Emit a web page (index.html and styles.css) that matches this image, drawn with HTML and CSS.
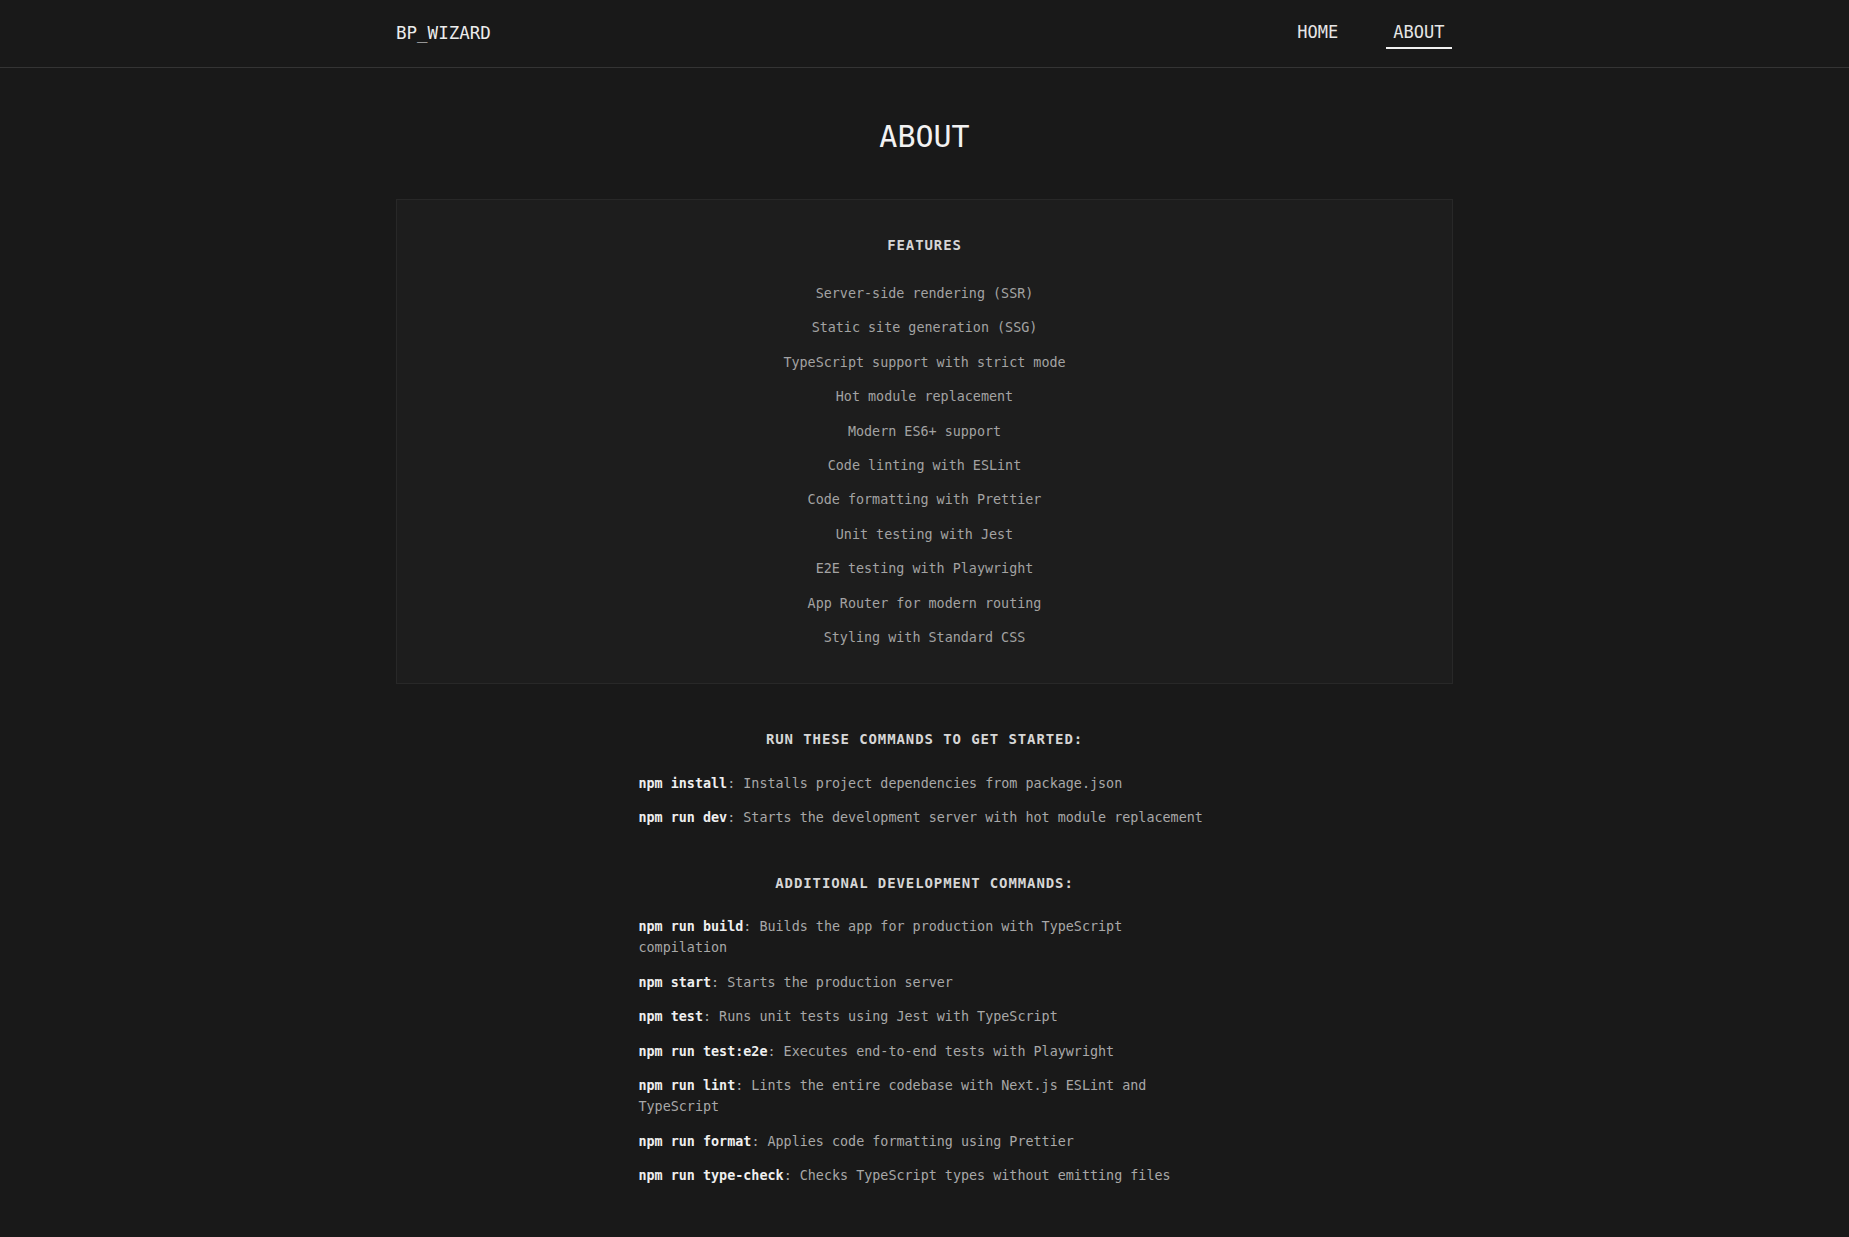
FILE: index.html
```html
<!DOCTYPE html>
<html lang="en">
<head>
<meta charset="utf-8">
<title>About - BP_WIZARD</title>
<link rel="stylesheet" href="styles.css">
</head>
<body>
<header class="site-header">
  <div class="container header-inner">
    <a class="logo" href="#">BP_WIZARD</a>
    <nav class="nav">
      <a class="nav-link" href="#">HOME</a>
      <a class="nav-link active" href="#">ABOUT</a>
    </nav>
  </div>
</header>
<main class="container main">
  <h1 class="page-title">ABOUT</h1>
  <section class="features">
    <h2 class="section-heading">FEATURES</h2>
    <ul class="feature-list">
      <li>Server-side rendering (SSR)</li>
      <li>Static site generation (SSG)</li>
      <li>TypeScript support with strict mode</li>
      <li>Hot module replacement</li>
      <li>Modern ES6+ support</li>
      <li>Code linting with ESLint</li>
      <li>Code formatting with Prettier</li>
      <li>Unit testing with Jest</li>
      <li>E2E testing with Playwright</li>
      <li>App Router for modern routing</li>
      <li>Styling with Standard CSS</li>
    </ul>
  </section>
  <section class="commands">
    <h2 class="section-heading">RUN THESE COMMANDS TO GET STARTED:</h2>
    <ul class="command-list">
      <li><span class="cmd">npm install</span>: Installs project dependencies from package.json</li>
      <li><span class="cmd">npm run dev</span>: Starts the development server with hot module replacement</li>
    </ul>
  </section>
  <section class="commands commands-extra">
    <h2 class="section-heading">ADDITIONAL DEVELOPMENT COMMANDS:</h2>
    <ul class="command-list">
      <li><span class="cmd">npm run build</span>: Builds the app for production with TypeScript compilation</li>
      <li><span class="cmd">npm start</span>: Starts the production server</li>
      <li><span class="cmd">npm test</span>: Runs unit tests using Jest with TypeScript</li>
      <li><span class="cmd">npm run test:e2e</span>: Executes end-to-end tests with Playwright</li>
      <li><span class="cmd">npm run lint</span>: Lints the entire codebase with Next.js ESLint and TypeScript</li>
      <li><span class="cmd">npm run format</span>: Applies code formatting using Prettier</li>
      <li><span class="cmd">npm run type-check</span>: Checks TypeScript types without emitting files</li>
    </ul>
  </section>
</main>
</body>
</html>
```

FILE: styles.css
```css
* {
  box-sizing: border-box;
}

html, body {
  margin: 0;
  padding: 0;
}

body {
  background: #191919;
  color: #a6a6a6;
  font-family: "DejaVu Sans Mono", "Liberation Mono", monospace;
  font-size: 13.4px;
  line-height: 21px;
}

a {
  text-decoration: none;
  color: inherit;
}

.container {
  width: 1057px;
  margin: 0 auto;
}

.site-header {
  border-bottom: 1px solid #343434;
}

.header-inner {
  height: 67px;
  display: flex;
  align-items: center;
  justify-content: space-between;
}

.logo {
  color: #ececec;
  font-size: 17.5px;
  line-height: 21px;
  margin-top: -1px;
}

.nav {
  display: flex;
  gap: 40px;
  align-items: center;
  margin-top: 4px;
}

.nav-link {
  color: #e6e6e6;
  font-size: 17px;
  line-height: 21px;
  padding: 0 7.5px 4px;
  border-bottom: 2px solid transparent;
}

.nav-link.active {
  border-bottom-color: #f2f2f2;
  margin-right: 1px;
}

.main {
  padding-bottom: 52px;
}

.page-title {
  margin: 49px 0 42px;
  text-align: center;
  font-weight: normal;
  font-size: 30px;
  line-height: 40px;
  color: #f2f2f2;
}

.features {
  background: #1d1d1d;
  border: 1px solid #282828;
  padding: 35px 20px 35px;
  text-align: center;
}

.section-heading {
  margin: 0;
  font-size: 14px;
  line-height: 21px;
  font-weight: bold;
  letter-spacing: 0.9px;
  color: #d6d6d6;
  text-align: center;
}

.features .section-heading {
  margin-bottom: 27px;
}

.feature-list,
.command-list {
  list-style: none;
  margin: 0;
  padding: 0;
  display: flex;
  flex-direction: column;
  gap: 13.4px;
}

.command-list {
  gap: 13.5px;
}

.feature-list li {
  color: #a3a3a3;
}

.commands {
  width: 572px;
  margin: 45.5px auto 0;
}

.commands-extra {
  margin-top: 44.5px;
}

.commands .section-heading {
  margin-bottom: 22.5px;
}

.command-list li {
  color: #a8a8a8;
}

.cmd {
  color: #efefef;
  font-weight: bold;
}
```
